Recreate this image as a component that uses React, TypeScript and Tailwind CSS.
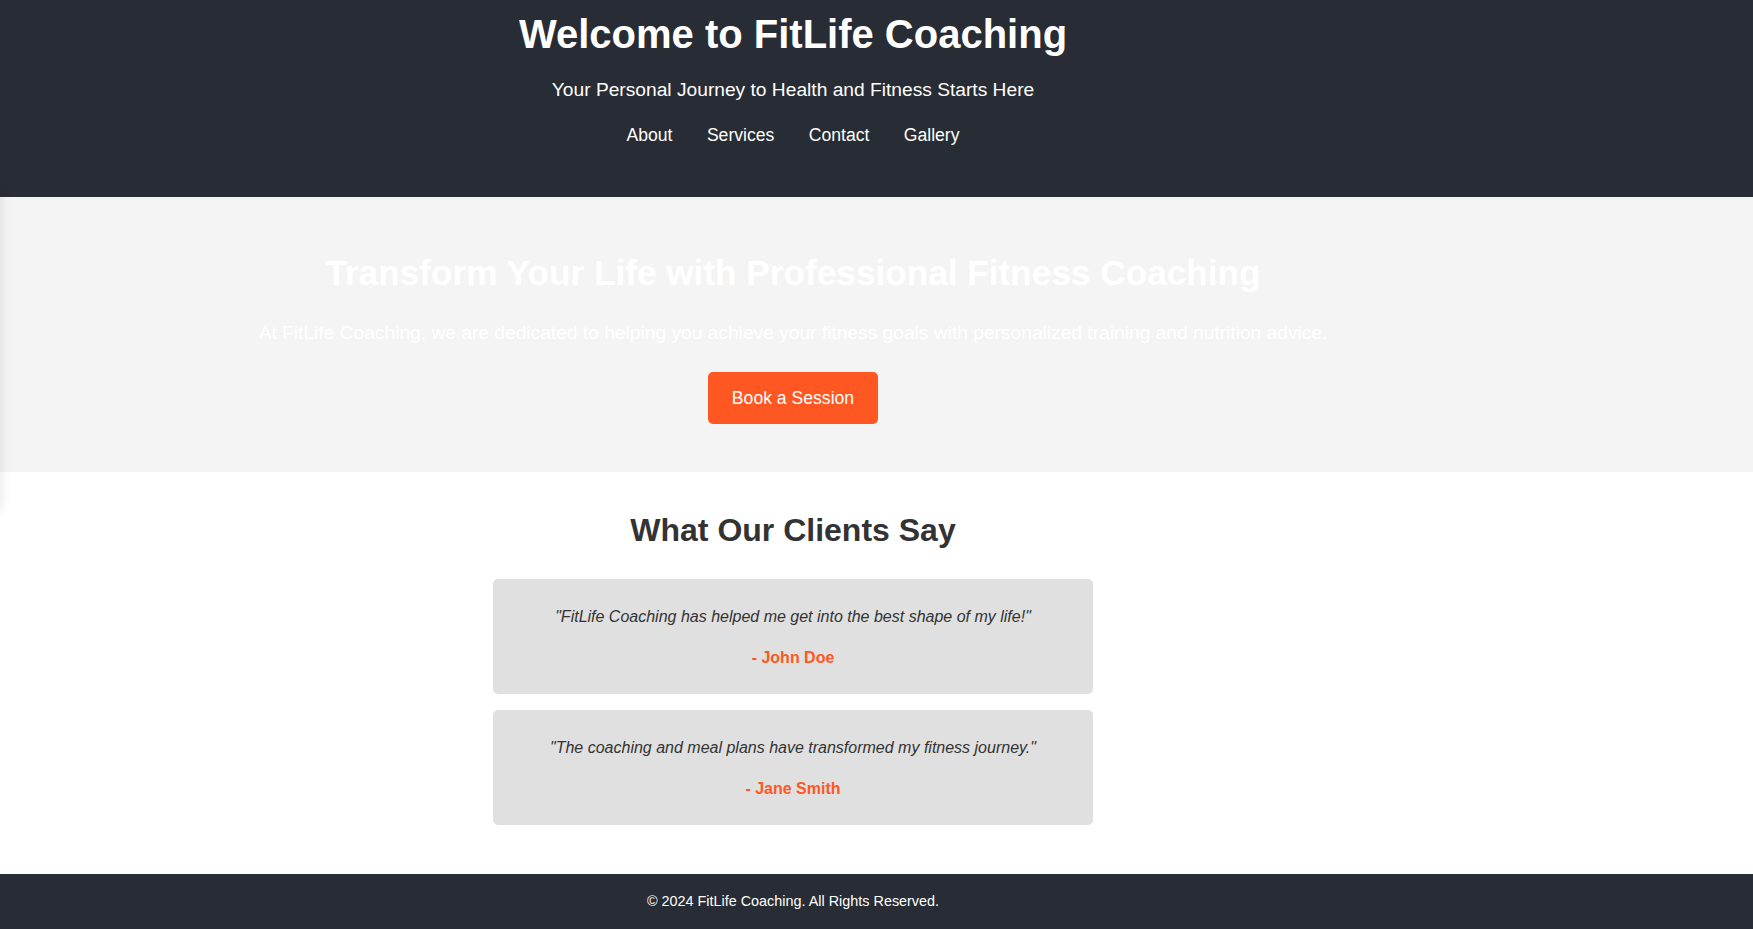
import React from "react";

const navLinks = ["About", "Services", "Contact", "Gallery"];

const testimonials = [
    {
        quote: "\"FitLife Coaching has helped me get into the best shape of my life!\"",
        author: "- John Doe",
    },
    {
        quote: "\"The coaching and meal plans have transformed my fitness journey.\"",
        author: "- Jane Smith",
    },
];

export default function App() {
    return (
        <div className="relative min-h-[929px] overflow-hidden bg-white font-['Liberation_Sans',Arial,sans-serif] flex flex-col">
            {/* Header */}
            <header className="h-[197px] bg-[#282c34] text-white">
                <div className="w-[1586px] flex flex-col items-center pt-[11px]">
                    <h1 className="text-[40px] leading-[46px] font-bold">Welcome to FitLife Coaching</h1>
                    <p className="mt-[22px] text-[19.2px] leading-[22px]">
                        Your Personal Journey to Health and Fitness Starts Here
                    </p>
                    <nav className="mt-[24px] flex gap-[34.4px] text-[17.6px] leading-[20px]">
                        {navLinks.map((link) => (
                            <a key={link} href="#" className="text-white">
                                {link}
                            </a>
                        ))}
                    </nav>
                </div>
            </header>

            {/* Hero */}
            <section className="h-[275px] bg-[#f4f4f4] text-white">
                <div className="w-[1586px] flex flex-col items-center pt-[56px]">
                    <h2 className="text-[35.2px] leading-[40px] font-bold">
                        Transform Your Life with Professional Fitness Coaching
                    </h2>
                    <p className="mt-[29px] text-[19.2px] leading-[22px]">
                        At FitLife Coaching, we are dedicated to helping you achieve your fitness goals with personalized training and nutrition advice.
                    </p>
                    <button className="mt-[28px] w-[170px] h-[52px] rounded-[5px] bg-[#ff5722] text-white text-[17.6px] leading-[20px] flex items-center justify-center">
                        Book a Session
                    </button>
                </div>
            </section>

            {/* Testimonials */}
            <section className="flex-1 bg-white">
                <div className="w-[1586px] flex flex-col items-center pt-[40px]">
                    <h2 className="text-[32px] leading-[36px] font-bold text-[#333]">What Our Clients Say</h2>
                    <div className="mt-[31px] flex flex-col gap-[16px]">
                        {testimonials.map((t) => (
                            <div
                                key={t.author}
                                className="w-[600px] rounded-[5px] bg-[#e0e0e0] pt-[28px] pb-[27px] flex flex-col items-center gap-[22px] text-[16px] leading-[19px]"
                            >
                                <p className="italic text-[#333]">{t.quote}</p>
                                <p className="font-bold text-[#ff5722]">{t.author}</p>
                            </div>
                        ))}
                    </div>
                </div>
            </section>

            {/* Footer */}
            <footer className="h-[55px] bg-[#282c34] text-white">
                <div className="w-[1586px] h-full flex items-center justify-center text-[14.4px]">
                    © 2024 FitLife Coaching. All Rights Reserved.
                </div>
            </footer>

            {/* faint edge shadow on the left */}
            <div className="absolute -left-[10px] top-[190px] h-[320px] w-[10px] shadow-[0_0_12px_rgba(0,0,0,0.12)]" />
        </div>
    );
}
